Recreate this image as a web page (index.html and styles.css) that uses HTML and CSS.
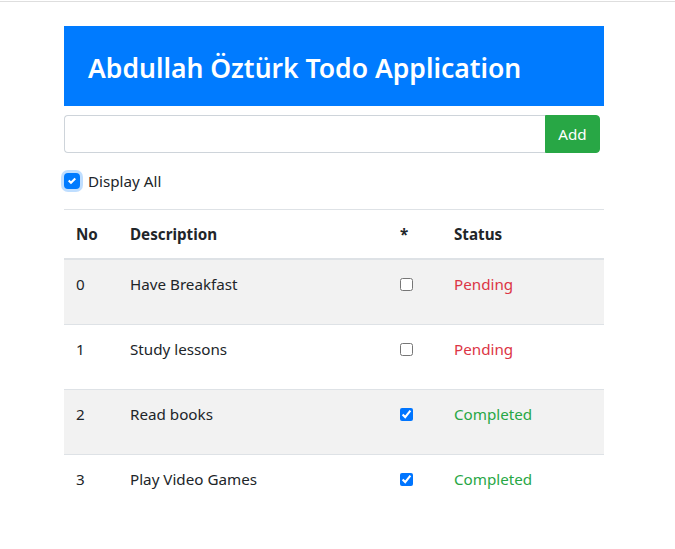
FILE: index.html
```html
<!DOCTYPE html>
<html lang="en">
<head>
<meta charset="utf-8">
<title>Todo</title>
<link rel="stylesheet" href="styles.css">
</head>
<body>
<div class="topline"></div>
<div class="container">
  <div class="banner"><h3 class="title">Abdullah Öztürk Todo Application</h3></div>
  <div class="input-group">
    <input class="form-control" type="text">
    <button class="btn-add">Add</button>
  </div>
  <label class="custom-check">
    <span class="box">
      <svg viewBox="0 0 8 8" width="8" height="8"><path fill="#fff" d="M6.564.75l-3.59 3.612-1.538-1.55L0 4.26l2.974 2.99L8 2.193z"/></svg>
    </span>
    <span class="check-label">Display All</span>
  </label>
  <table class="table">
    <thead>
      <tr><th class="c-no">No</th><th class="c-desc">Description</th><th class="c-chk">*</th><th class="c-status">Status</th></tr>
    </thead>
    <tbody>
      <tr class="odd"><td>0</td><td>Have Breakfast</td><td><input type="checkbox" class="cb"></td><td class="pending">Pending</td></tr>
      <tr><td>1</td><td>Study lessons</td><td><input type="checkbox" class="cb"></td><td class="pending">Pending</td></tr>
      <tr class="odd"><td>2</td><td>Read books</td><td><input type="checkbox" class="cb" checked></td><td class="completed">Completed</td></tr>
      <tr><td>3</td><td>Play Video Games</td><td><input type="checkbox" class="cb" checked></td><td class="completed">Completed</td></tr>
    </tbody>
  </table>
</div>
</body>
</html>
```
FILE: styles.css
```css
html, body {
  margin: 0;
  padding: 0;
  background: #fff;
}
body {
  font-family: "Noto Sans", "Open Sans", sans-serif;
  font-size: 15.2px;
  line-height: 24px;
  color: #212529;
}
.topline {
  margin-top: 1px;
  height: 1px;
  background: #dedede;
}
.container {
  width: 540px;
  margin: 24px 0 0 64px;
}
.banner {
  background: #007bff;
  height: 80px;
  display: flex;
  align-items: center;
  padding-left: 24px;
}
.title {
  margin: 4px 0 0 0;
  color: #fff;
  font-size: 26.5px;
  font-weight: 600;
  line-height: 34px;
}
.input-group {
  display: flex;
  width: 536px;
  margin-top: 9px;
  height: 38px;
}
.form-control {
  flex: 1;
  height: 38px;
  box-sizing: border-box;
  border: 1px solid #ced4da;
  border-right: none;
  border-radius: 4px 0 0 4px;
  padding: 6px 12px;
  font: inherit;
  outline: none;
}
.btn-add {
  width: 55px;
  height: 38px;
  border: 1px solid #28a745;
  background: #28a745;
  color: #fff;
  font: inherit;
  border-radius: 0 4px 4px 0;
  padding: 0;
}
.custom-check {
  display: flex;
  align-items: center;
  margin-top: 20px;
  height: 16px;
}
.box {
  width: 16px;
  height: 16px;
  box-sizing: border-box;
  background: #007bff;
  border-radius: 4px;
  box-shadow: 0 0 0 3px rgba(0, 123, 255, 0.25);
  display: flex;
  align-items: center;
  justify-content: center;
}
.check-label {
  margin-left: 8px;
}
.table {
  width: 540px;
  margin-top: 20px;
  border-collapse: collapse;
}
.table th, .table td {
  text-align: left;
  padding: 12px;
  border-top: 1px solid #dee2e6;
  vertical-align: top;
}
.table th {
  font-weight: 700;
  border-bottom: 2px solid #dee2e6;
}
.table td {
  height: 40px;
}
.c-no { width: 30px; }
.c-desc { width: 246px; }
.c-chk { width: 30px; }
tr.odd td { background: #f2f2f2; }
.cb {
  margin: 6px 0 0 0;
  width: 13px;
  height: 13px;
}
.pending { color: #dc3545; }
.completed { color: #28a745; }
```
